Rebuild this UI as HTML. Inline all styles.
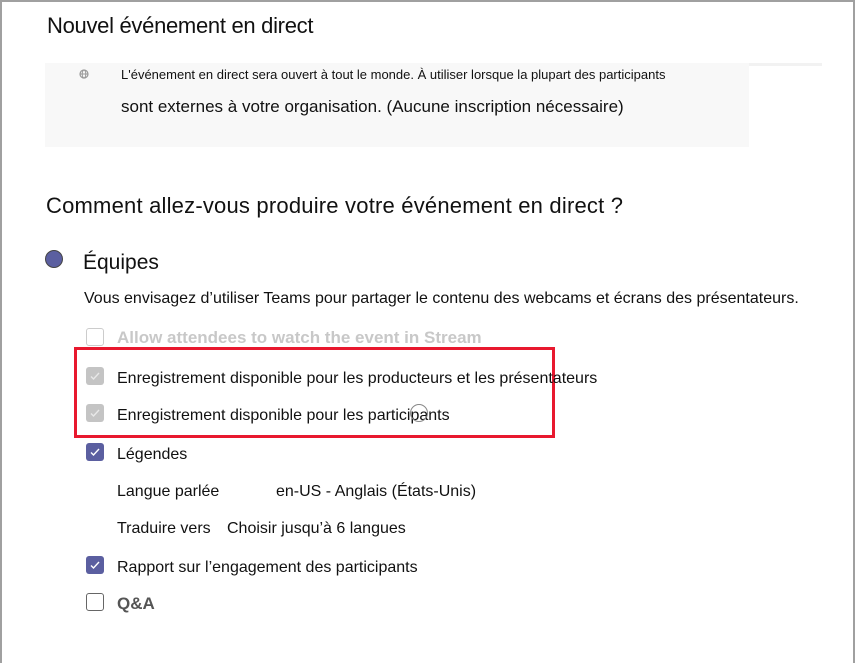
<!DOCTYPE html>
<html><head><meta charset="utf-8"><style>
*{margin:0;padding:0;box-sizing:border-box}
body{width:857px;height:663px;background:#fff;font-family:"Liberation Sans",Arial,sans-serif;color:#111;position:relative;overflow:hidden}
.frame{position:absolute;left:0;top:0;width:855px;height:663px;border:2px solid #a0a0a0;border-bottom:none}
.a{position:absolute;white-space:nowrap}
.cb{position:absolute;width:18px;height:18px;border-radius:3px}
.cb svg{position:absolute;left:3px;top:3px}
</style></head><body>
<div class="frame"></div>
<div class="a" style="left:47px;top:13px;font-size:22px;letter-spacing:-0.3px">Nouvel événement en direct</div>
<div class="a" style="left:45px;top:63px;width:777px;height:3px;background:#f2f2f2"></div>
<div class="a" style="left:45px;top:63px;width:704px;height:84px;background:#f8f8f8"></div>
<svg class="a" style="left:79px;top:69px" width="10" height="10" viewBox="0 0 10 10"><circle cx="5" cy="5" r="4" fill="none" stroke="#999" stroke-width="1.2"/><line x1="1" y1="5" x2="9" y2="5" stroke="#999"/><ellipse cx="5" cy="5" rx="1.8" ry="4" fill="none" stroke="#999"/></svg>
<div class="a" style="left:121px;top:67px;font-size:13px">L'événement en direct sera ouvert à tout le monde. À utiliser lorsque la plupart des participants</div>
<div class="a" style="left:121px;top:97px;font-size:17px">sont externes à votre organisation. (Aucune inscription nécessaire)</div>
<div class="a" style="left:46px;top:193px;font-size:22px;letter-spacing:0.2px">Comment allez-vous produire votre événement en direct ?</div>
<div class="a" style="left:45px;top:250px;width:18px;height:18px;border-radius:50%;background:#5b5fa0;border:1px solid #444"></div>
<div class="a" style="left:83px;top:251px;font-size:21px">Équipes</div>
<div class="a" style="left:84px;top:290px;font-size:16px">Vous envisagez d’utiliser Teams pour partager le contenu des webcams et écrans des présentateurs.</div>
<div class="cb" style="left:86px;top:328px;border:1.5px solid #ccc"></div>
<div class="a" style="left:117px;top:328px;font-size:17px;font-weight:bold;color:#c8c8c8">Allow attendees to watch the event in Stream</div>
<div class="a" style="left:74px;top:347px;width:481px;height:91px;border:3px solid #e8182e"></div>
<div class="cb" style="left:86px;top:367px;background:#c4c4c4"><svg width="12" height="12" viewBox="0 0 12 12"><path d="M2 6.5l2.5 2.5 5.5-6" fill="none" stroke="#e8e8e8" stroke-width="1.4"/></svg></div>
<div class="a" style="left:117px;top:370px;font-size:16px">Enregistrement disponible pour les producteurs et les présentateurs</div>
<div class="cb" style="left:86px;top:404px;background:#c4c4c4"><svg width="12" height="12" viewBox="0 0 12 12"><path d="M2 6.5l2.5 2.5 5.5-6" fill="none" stroke="#e8e8e8" stroke-width="1.4"/></svg></div>
<div class="a" style="left:117px;top:407px;font-size:16px">Enregistrement disponible pour les participants</div>
<div class="a" style="left:410px;top:404px;width:18px;height:18px;border-radius:50%;border:1.5px solid #888"></div>
<div class="cb" style="left:86px;top:443px;background:#5b5fa0"><svg width="12" height="12" viewBox="0 0 12 12"><path d="M2 6.5l2.5 2.5 5.5-6" fill="none" stroke="#fff" stroke-width="1.4"/></svg></div>
<div class="a" style="left:117px;top:446px;font-size:16px">Légendes</div>
<div class="a" style="left:117px;top:483px;font-size:16px">Langue parlée</div>
<div class="a" style="left:276px;top:483px;font-size:16px">en-US - Anglais (États-Unis)</div>
<div class="a" style="left:117px;top:520px;font-size:16px">Traduire vers</div>
<div class="a" style="left:227px;top:520px;font-size:16px">Choisir jusqu’à 6 langues</div>
<div class="cb" style="left:86px;top:556px;background:#5b5fa0"><svg width="12" height="12" viewBox="0 0 12 12"><path d="M2 6.5l2.5 2.5 5.5-6" fill="none" stroke="#fff" stroke-width="1.4"/></svg></div>
<div class="a" style="left:117px;top:559px;font-size:16px">Rapport sur l’engagement des participants</div>
<div class="cb" style="left:86px;top:593px;border:1.5px solid #666"></div>
<div class="a" style="left:117px;top:594px;font-size:17px;font-weight:bold;color:#555">Q&amp;A</div>
</body></html>
